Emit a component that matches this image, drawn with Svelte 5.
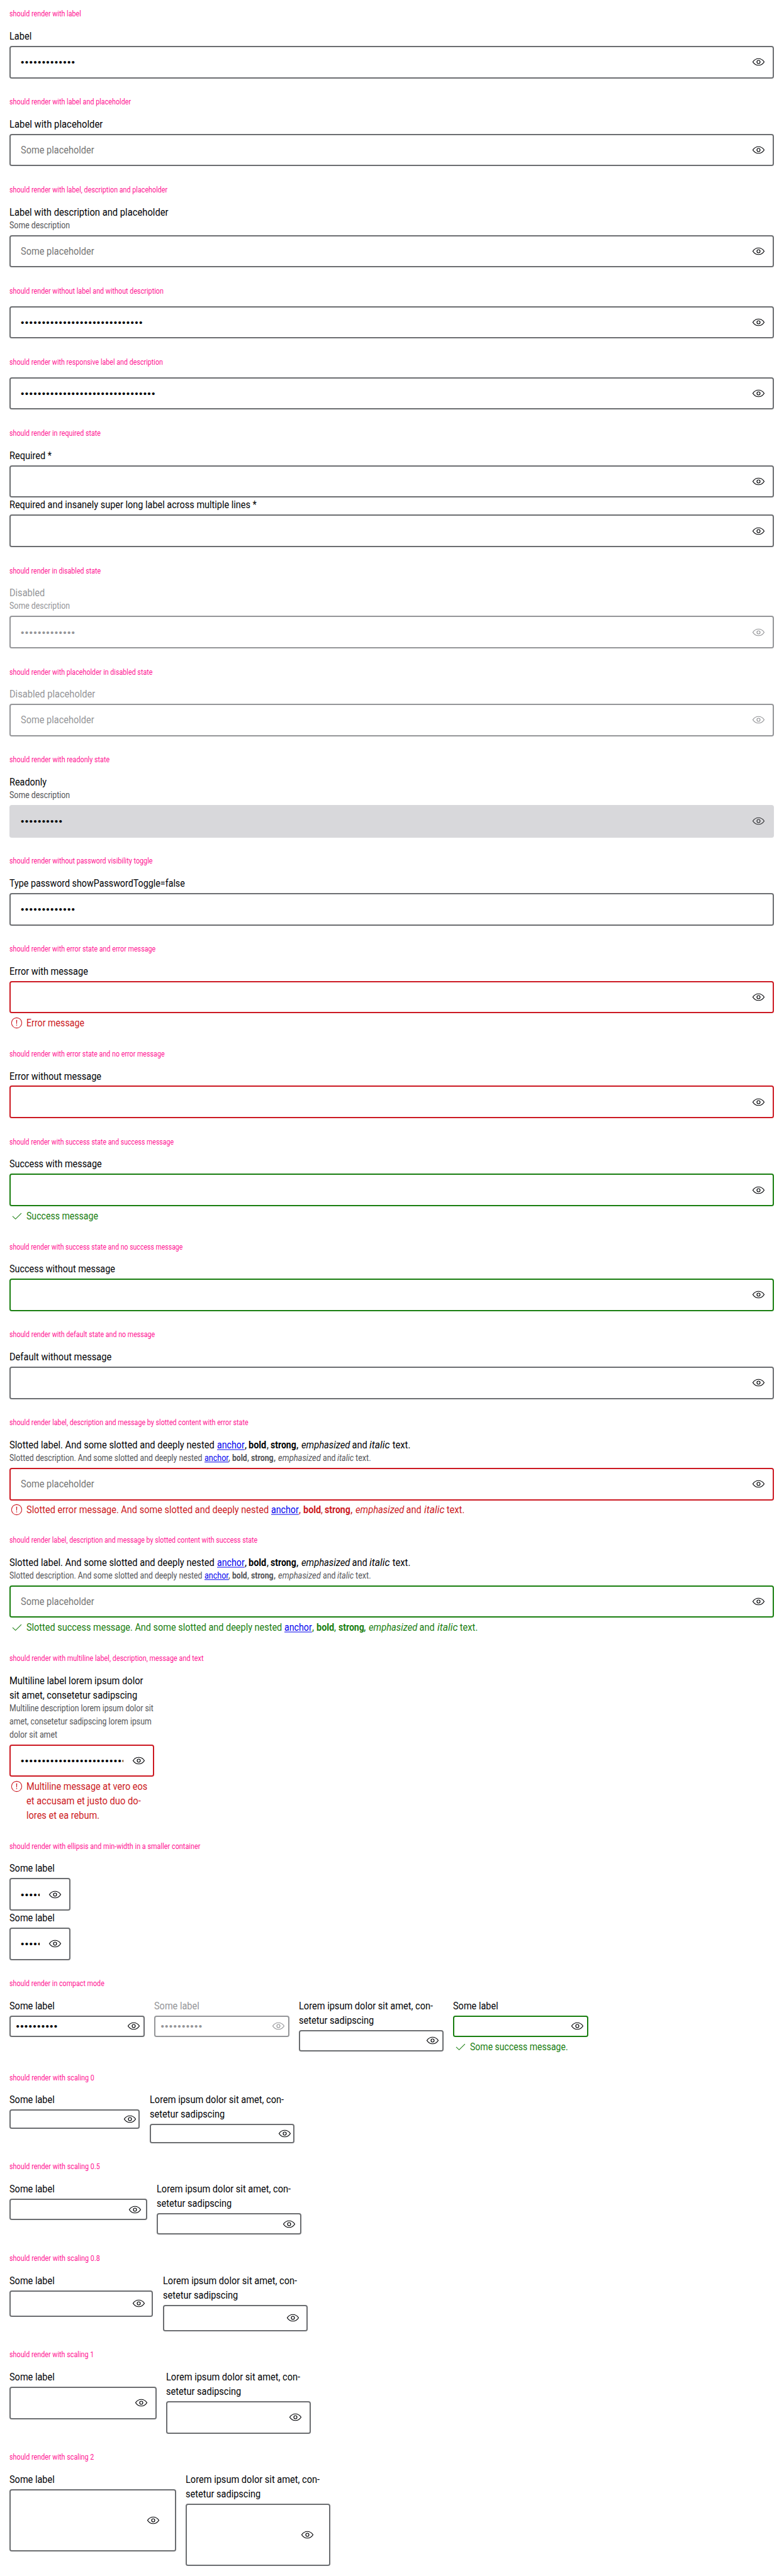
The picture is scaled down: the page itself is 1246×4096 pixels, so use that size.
<script>
  // Condenses or widens a run of text horizontally so that it occupies `width` px.
  function fit(node, width) {
    const scale = node.closest('.page').getBoundingClientRect().width / 1300;
    const natural = node.getBoundingClientRect().width / scale;
    node.style.transform = `scaleX(${width / natural})`;
    node.style.marginRight = `${width - natural}px`;
  }

  const some = { label: [['Some label', 74.8]] };
  const lorem = { label: [['Lorem ipsum dolor sit amet, con-', 222.4], ['setetur sadipscing', 124.4]], width: 240 };
  const placeholder = true;

  const rich = (first, w, size) => {
    const t = size === 'small'
      ? [40.3, 6.3, 24.7, 6.6, 37.2, 7.2, 70.7, 27.7, 27.3, 28.7]
      : [45.7, 7.2, 29.5, 6.8, 42.5, 8, 80.7, 32.8, 34, 33.7];
    return [
      { tag: 'span', text: first + ' And some slotted and deeply nested ', w },
      { tag: 'a', text: 'anchor', w: t[0] },
      { tag: 'span', text: ', ', w: t[1] },
      { tag: 'b', text: 'bold', w: t[2] },
      { tag: 'span', text: ', ', w: t[3] },
      { tag: 'strong', text: 'strong', w: t[4] },
      { tag: 'span', text: ', ', w: t[5] },
      { tag: 'em', text: 'emphasized', w: t[6] },
      { tag: 'span', text: ' and ', w: t[7] },
      { tag: 'i', text: 'italic', w: t[8] },
      { tag: 'span', text: ' text.', w: t[9] }
    ];
  };
  const richLabel = rich('Slotted label.', 343.8);
  const richDesc = rich('Slotted description.', 322.9, 'small');
  const description = [['Some description', 100.4]];

  const sections = [
    { title: 'should render with label', w: 118.9, fields: [{ label: [['Label', 36.8]], dots: 13 }] },
    { title: 'should render with label and placeholder', w: 201.6, fields: [{ label: [['Label with placeholder', 154.8]], placeholder }] },
    { title: 'should render with label, description and placeholder', w: 262.2, fields: [{ label: [['Label with description and placeholder', 263.6]], description, placeholder }] },
    { title: 'should render without label and without description', w: 255.6, fields: [{ dots: 29 }] },
    { title: 'should render with responsive label and description', w: 254.6, fields: [{ dots: 32 }] },
    { title: 'should render in required state', w: 151.4, fields: [{ label: [['Required *', 69.9]] }, { label: [['Required and insanely super long label across multiple lines *', 410]] }] },
    { title: 'should render in disabled state', w: 151.4, fields: [{ label: [['Disabled', 58.7]], description, dots: 13, state: 'disabled' }] },
    { title: 'should render with placeholder in disabled state', w: 237.4, fields: [{ label: [['Disabled placeholder', 142.3]], placeholder, state: 'disabled' }] },
    { title: 'should render with readonly state', w: 166.2, fields: [{ label: [['Readonly', 61.7]], description, dots: 10, state: 'readonly' }] },
    { title: 'should render without password visibility toggle', w: 237.4, fields: [{ label: [['Type password showPasswordToggle=false', 291]], dots: 13, noToggle: true }] },
    { title: 'should render with error state and error message', w: 242.4, fields: [{ label: [['Error with message', 130.3]], state: 'error', message: [['Error message', 96]] }] },
    { title: 'should render with error state and no error message', w: 257.4, fields: [{ label: [['Error without message', 152.4]], state: 'error' }] },
    { title: 'should render with success state and success message', w: 272.4, fields: [{ label: [['Success with message', 153]], state: 'success', message: [['Success message', 118.9]] }] },
    { title: 'should render with success state and no success message', w: 287.4, fields: [{ label: [['Success without message', 175.3]], state: 'success' }] },
    { title: 'should render with default state and no message', w: 241.4, fields: [{ label: [['Default without message', 169.3]] }] },
    { title: 'should render label, description and message by slotted content with error state', w: 396.2, tight: true, fields: [{ richLabel, richDesc, placeholder, state: 'error', richMessage: rich('Slotted error message.', 405.8) }] },
    { title: 'should render label, description and message by slotted content with success state', w: 411.4, fields: [{ richLabel, richDesc, placeholder, state: 'success', richMessage: rich('Slotted success message.', 427.8) }] },
    {
      title: 'should render with multiline label, description, message and text', w: 322,
      fields: [{
        width: 240, state: 'error', dots: 40,
        label: [['Multiline label lorem ipsum dolor', 221.8], ['sit amet, consetetur sadipscing', 212]],
        description: [['Multiline description lorem ipsum dolor sit', 238.7], ['amet, consetetur sadipscing lorem ipsum', 235.6], ['dolor sit amet', 79.4]],
        message: [['Multiline message at vero eos', 200.6], ['et accusam et justo duo do-', 189.8], ['lores et ea rebum.', 121.2]]
      }]
    },
    { title: 'should render with ellipsis and min-width in a smaller container', w: 316.7, fields: [{ ...some, width: 101, dots: 10 }, { ...some, width: 101, dots: 10 }] },
    {
      title: 'should render in compact mode', w: 157.4, row: true, size: 'compact',
      fields: [
        { ...some, width: 224, dots: 10 },
        { ...some, width: 224, dots: 10, state: 'disabled' },
        lorem,
        { ...some, width: 224, state: 'success', message: [['Some success message.', 162.4]] }
      ]
    },
    { title: 'should render with scaling 0', w: 140.8, row: true, size: 's0', fields: [{ ...some, width: 216 }, lorem] },
    { title: 'should render with scaling 0.5', w: 150.2, row: true, size: 's05', fields: [{ ...some, width: 228 }, lorem] },
    { title: 'should render with scaling 0.8', w: 150.2, row: true, size: 's08', fields: [{ ...some, width: 238 }, lorem] },
    { title: 'should render with scaling 1', w: 140.2, row: true, size: 's1', fields: [{ ...some, width: 244 }, lorem] },
    { title: 'should render with scaling 2', w: 140.2, row: true, size: 's2', fields: [{ ...some, width: 276 }, lorem] }
  ];
</script>

{#snippet lines(list)}
  {#each list as [text, w]}
    <div class="line"><span class="fit" use:fit={w}>{text}</span></div>
  {/each}
{/snippet}

{#snippet richLine(parts)}
  <div class="line">{#each parts as p}<svelte:element this={p.tag} class="fit" use:fit={p.w}>{p.text}</svelte:element>{/each}</div>
{/snippet}

<main class="page">
  {#each sections as s}
    <section class:tight={s.tight}>
      <h2><span class="fit" use:fit={s.w}>{s.title}</span></h2>
      <div class="fields {s.size ?? ''}" class:row={s.row}>
        {#each s.fields as f}
          <div class="field {f.state ?? ''}" style:width={f.width ? `${f.width}px` : null}>
            {#if f.label || f.richLabel}
              <div class="head">
                <div class="label">
                  {#if f.richLabel}{@render richLine(f.richLabel)}{:else}{@render lines(f.label)}{/if}
                </div>
                {#if f.description || f.richDesc}
                  <div class="desc">
                    {#if f.richDesc}{@render richLine(f.richDesc)}{:else}{@render lines(f.description)}{/if}
                  </div>
                {/if}
              </div>
            {/if}
            <div class="box">
              <div class="value">
                {#if f.dots}<span class="dots">{'•'.repeat(f.dots)}</span>{/if}
                {#if f.placeholder}<span class="fit ph" use:fit={121.8}>Some placeholder</span>{/if}
              </div>
              {#if !f.noToggle}
                <svg class="eye" viewBox="0 0 24 24">
                  <path d="M2.6 12C5 8.3 8.1 6.5 12 6.5S19 8.3 21.4 12C19 15.7 15.9 17.5 12 17.5S5 15.7 2.6 12Z" />
                  <circle cx="12" cy="12" r="2.6" />
                </svg>
              {/if}
            </div>
            {#if f.message || f.richMessage}
              <div class="message">
                <svg viewBox="0 0 24 24">
                  {#if f.state === 'error'}
                    <circle cx="12" cy="12" r="8.5" />
                    <path class="solid" d="M11.2 7h1.6l-.3 6.6h-1zM11.3 14.9h1.4v1.5h-1.4z" />
                  {:else}
                    <path d="M5.2 12.3L10.1 17L19.8 7.4" />
                  {/if}
                </svg>
                <div>
                  {#if f.richMessage}{@render richLine(f.richMessage)}{:else}{@render lines(f.message)}{/if}
                </div>
              </div>
            {/if}
          </div>
        {/each}
      </div>
    </section>
  {/each}
</main>

<style>
  :global(body) {
    margin: 0;
    background: #fff;
    overflow: hidden;
  }
  .page {
    width: 1300px;
    zoom: 0.95813;
    font-family: Roboto, "Liberation Sans", sans-serif;
    font-size: 16.8px;
    line-height: 24px;
    color: #010205;
  }
  section {
    padding: 16px;
  }
  section.tight {
    padding-bottom: 15px;
  }
  h2 {
    margin: 0 0 16px;
    height: 16px;
    font-size: 12.6px;
    line-height: 16px;
    font-weight: 400;
    color: #ff1493;
  }
  .fit {
    display: inline-block;
    white-space: pre;
    transform-origin: 0 50%;
    translate: 0 0.5px;
    vertical-align: top;
  }
  .line {
    white-space: nowrap;
  }
  a {
    color: #0000ee;
    text-decoration: underline;
  }
  b,
  strong {
    font-weight: 700;
  }
  .row {
    display: flex;
    align-items: flex-start;
    gap: 16px;
  }
  .head {
    margin-bottom: 4px;
  }
  .desc {
    font-size: 14.6px;
    line-height: 22px;
    color: #535457;
  }
  .desc .fit {
    translate: 0 -0.8px;
  }
  .box {
    --c: #6b6d70;
    box-sizing: border-box;
    display: flex;
    align-items: center;
    height: 54px;
    padding: 0 11.9px 0 15.9px;
    border: 2.1px solid var(--c);
    border-radius: 4px;
  }
  .value {
    flex: 1;
    min-width: 0;
    height: 24px;
    margin-right: 13px;
    overflow: hidden;
    white-space: nowrap;
  }
  .dots {
    display: inline-block;
    margin-left: 0.6px;
    font-family: "Liberation Sans", sans-serif;
    font-size: 16px;
    letter-spacing: 1.4px;
    translate: 0 0.5px;
  }
  .ph {
    color: #757575;
  }
  svg {
    flex: none;
    width: 24px;
    height: 24px;
    fill: none;
    stroke: currentColor;
    stroke-width: 1.1;
  }
  .eye {
    stroke-width: 1.25;
  }
  .solid {
    fill: currentColor;
    stroke: none;
  }
  .message {
    display: flex;
    gap: 4px;
    margin-top: 4px;
  }
  .error .box {
    --c: #cc1922;
  }
  .error .message {
    color: #cc1922;
  }
  .success .box {
    --c: #197e10;
  }
  .success .message {
    color: #197e10;
  }
  .disabled .box {
    --c: #949598;
  }
  .disabled,
  .disabled .desc,
  .disabled .ph {
    color: #949598;
  }
  .readonly .box {
    --c: #d8d8db;
    background: #d8d8db;
  }
  .readonly .eye {
    color: #303134;
  }
  .compact .box {
    height: 36px;
    padding: 0 3.9px 0 7.9px;
  }
  .s0 .box {
    height: 32px;
    padding: 0 1.9px 0 5.9px;
  }
  .s05 .box {
    height: 36px;
    padding: 0 5.9px 0 9.9px;
  }
  .s08 .box {
    height: 44px;
    padding: 0 9.9px 0 13.9px;
  }
  .s2 .box {
    height: 104px;
    padding: 0 23.9px 0 27.9px;
  }
</style>
